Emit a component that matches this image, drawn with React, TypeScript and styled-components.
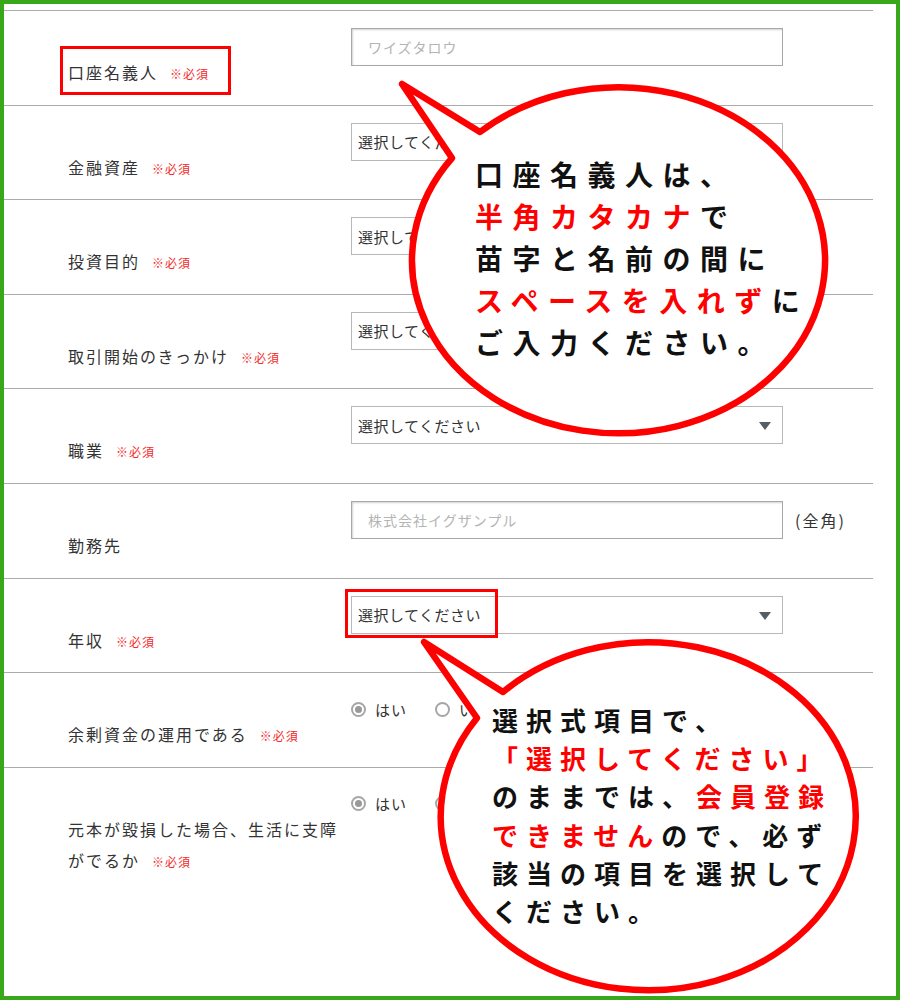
import styled, { createGlobalStyle } from "styled-components";

const GlobalStyle = createGlobalStyle`
  html, body {
    margin: 0;
    padding: 0;
    background: #fff;
  }
  body {
    font-family: "Noto Sans CJK JP", "Noto Sans", sans-serif;
  }
`;

const Frame = styled.div`
  position: relative;
  box-sizing: border-box;
  width: 900px;
  height: 1000px;
  border: 4px solid #38a81a;
  background: #fff;
  padding: 6px 23px 0 0;
  overflow: hidden;
`;

const Row = styled.div<{ $tall?: boolean }>`
  display: grid;
  grid-template-columns: 347px 1fr;
  box-sizing: border-box;
  height: ${(p) => (p.$tall ? "128px" : "94.6px")};
  border-top: 1px solid #ababab;

  &:last-child {
    border-bottom: 1px solid #ababab;
  }
`;

const Label = styled.div`
  padding: 46px 0 0 64px;
  font-size: 16px;
  line-height: 31px;
  letter-spacing: 2px;
  color: #333;
`;

const LabelText = styled.span`
  position: relative;
`;

const Required = styled.span`
  margin-left: 12px;
  font-size: 12px;
  letter-spacing: 1px;
  color: #f52a2a;
`;

const Highlight = styled.span<{ $w: number; $h: number; $x: number; $y: number }>`
  position: absolute;
  left: ${(p) => p.$x}px;
  top: ${(p) => p.$y}px;
  width: ${(p) => p.$w}px;
  height: ${(p) => p.$h}px;
  box-sizing: border-box;
  border: 3px solid #f00;
  pointer-events: none;
`;

const Field = styled.div`
  display: flex;
  align-items: center;
  align-self: start;
  padding-top: 17px;
  height: 38px;
`;

const TextInput = styled.input`
  box-sizing: border-box;
  width: 432px;
  height: 38px;
  margin: 0;
  padding: 0 16px;
  border: 1px solid #a8a8a8;
  box-shadow: inset 1px 1px 2px rgba(0, 0, 0, 0.18);
  font-family: inherit;
  font-size: 14px;
  letter-spacing: 1px;
  color: #333;
  outline: none;

  &::placeholder {
    color: #b4b4b4;
  }
`;

const SelectBox = styled.div`
  position: relative;
  box-sizing: border-box;
  display: flex;
  align-items: center;
  width: 432px;
  height: 38px;
  padding-left: 6px;
  border: 1px solid #b8b8b8;
  font-size: 15px;
  letter-spacing: 0.5px;
  color: #333;

  &::after {
    content: "";
    position: absolute;
    right: 11px;
    top: 15px;
    border-left: 6.5px solid transparent;
    border-right: 6.5px solid transparent;
    border-top: 8px solid #565d66;
  }
`;

const Note = styled.span`
  margin-left: 12px;
  font-size: 16px;
  letter-spacing: 2px;
  color: #333;
`;

const RadioOption = styled.label`
  display: flex;
  align-items: center;
  margin-right: 28px;
  font-size: 15px;
  letter-spacing: 1px;
  color: #333;
`;

const RadioMark = styled.span<{ $checked?: boolean }>`
  position: relative;
  box-sizing: border-box;
  width: 15px;
  height: 15px;
  margin-right: 9px;
  border: 2px solid #a6a6a6;
  border-radius: 50%;
  background: #fff;

  &::after {
    content: "";
    display: ${(p) => (p.$checked ? "block" : "none")};
    position: absolute;
    left: 2px;
    top: 2px;
    width: 7px;
    height: 7px;
    border-radius: 50%;
    background: #999;
  }
`;

const Bubble = styled.div<{ $left: number; $top: number; $padLeft: number }>`
  position: absolute;
  left: ${(p) => p.$left}px;
  top: ${(p) => p.$top}px;
  width: 445px;
  height: 365px;
  box-sizing: border-box;
  padding-left: ${(p) => p.$padLeft}px;
  display: flex;
  flex-direction: column;
  justify-content: center;

  & svg {
    position: absolute;
    left: 0;
    top: 0;
  }
`;

const BubbleText = styled.div<{ $size: number; $spacing: number; $line: number }>`
  position: relative;
  font-size: ${(p) => p.$size}px;
  letter-spacing: ${(p) => p.$spacing}px;
  line-height: ${(p) => p.$line}px;
  font-weight: 700;
  color: #111;
  white-space: nowrap;
`;

const Red = styled.span`
  color: #f00;
`;

type BubbleShapeProps = {
  x: number;
  y: number;
  rx: number;
  ry: number;
  tip: [number, number];
  a: [number, number];
  b: [number, number];
};

// speech balloon: ellipse outline with a pointed tail, drawn as one path
function BubbleShape({ x, y, rx, ry, tip, a, b }: BubbleShapeProps) {
  const d = `M ${a[0]} ${a[1]} L ${tip[0]} ${tip[1]} L ${b[0]} ${b[1]} A ${rx} ${ry} 0 1 0 ${a[0]} ${a[1]} Z`;
  return (
    <svg width="445" height="365" viewBox={`${x} ${y} 445 365`}>
      <path
        d={d}
        fill="#fff"
        stroke="#f00"
        strokeWidth="6.5"
        strokeLinejoin="round"
      />
    </svg>
  );
}

function Select() {
  return <SelectBox>選択してください</SelectBox>;
}

function App() {
  return (
    <>
      <GlobalStyle />
      <Frame>
        <Row>
          <Label>
            <LabelText>
              口座名義人<Required>※必須</Required>
              <Highlight $x={-8} $y={-14} $w={171} $h={49} />
            </LabelText>
          </Label>
          <Field>
            <TextInput placeholder="ワイズタロウ" />
          </Field>
        </Row>
        <Row>
          <Label>
            金融資産<Required>※必須</Required>
          </Label>
          <Field>
            <Select />
          </Field>
        </Row>
        <Row>
          <Label>
            投資目的<Required>※必須</Required>
          </Label>
          <Field>
            <Select />
          </Field>
        </Row>
        <Row>
          <Label>
            取引開始のきっかけ<Required>※必須</Required>
          </Label>
          <Field>
            <Select />
          </Field>
        </Row>
        <Row>
          <Label>
            職業<Required>※必須</Required>
          </Label>
          <Field>
            <Select />
          </Field>
        </Row>
        <Row>
          <Label>勤務先</Label>
          <Field>
            <TextInput placeholder="株式会社イグザンプル" />
            <Note>(全角)</Note>
          </Field>
        </Row>
        <Row>
          <Label>
            年収<Required>※必須</Required>
          </Label>
          <Field>
            <SelectBox>
              選択してください
              <Highlight $x={-7} $y={-8} $w={153} $h={49} />
            </SelectBox>
          </Field>
        </Row>
        <Row>
          <Label>
            余剰資金の運用である<Required>※必須</Required>
          </Label>
          <Field>
            <RadioOption>
              <RadioMark $checked />
              はい
            </RadioOption>
            <RadioOption>
              <RadioMark />
              いいえ
            </RadioOption>
          </Field>
        </Row>
        <Row $tall>
          <Label>
            元本が毀損した場合、生活に支障
            <br />
            がでるか<Required>※必須</Required>
          </Label>
          <Field>
            <RadioOption>
              <RadioMark $checked />
              はい
            </RadioOption>
            <RadioOption>
              <RadioMark />
              いいえ
            </RadioOption>
          </Field>
        </Row>

        <Bubble $left={391} $top={71} $padLeft={80}>
          <BubbleShape
            x={395}
            y={75}
            rx={206.5}
            ry={173}
            tip={[402, 84]}
            a={[480, 132]}
            b={[452, 158]}
          />
          <BubbleText $size={28} $spacing={9.5} $line={42}>
            口座名義人は、
            <br />
            <Red>半角カタカナ</Red>で
            <br />
            苗字と名前の間に
            <br />
            <Red>スペースを入れず</Red>に
            <br />
            ご入力ください。
          </BubbleText>
        </Bubble>

        <Bubble $left={414} $top={629} $padLeft={74}>
          <BubbleShape
            x={418}
            y={633}
            rx={207.5}
            ry={174}
            tip={[424, 642]}
            a={[503, 692]}
            b={[477, 718]}
          />
          <BubbleText $size={26} $spacing={8} $line={38.3}>
            選択式項目で、
            <br />
            <Red>「選択してください」</Red>
            <br />
            のままでは、<Red>会員登録</Red>
            <br />
            <Red>できません</Red>ので、必ず
            <br />
            該当の項目を選択して
            <br />
            ください。
          </BubbleText>
        </Bubble>
      </Frame>
    </>
  );
}

export default App;
